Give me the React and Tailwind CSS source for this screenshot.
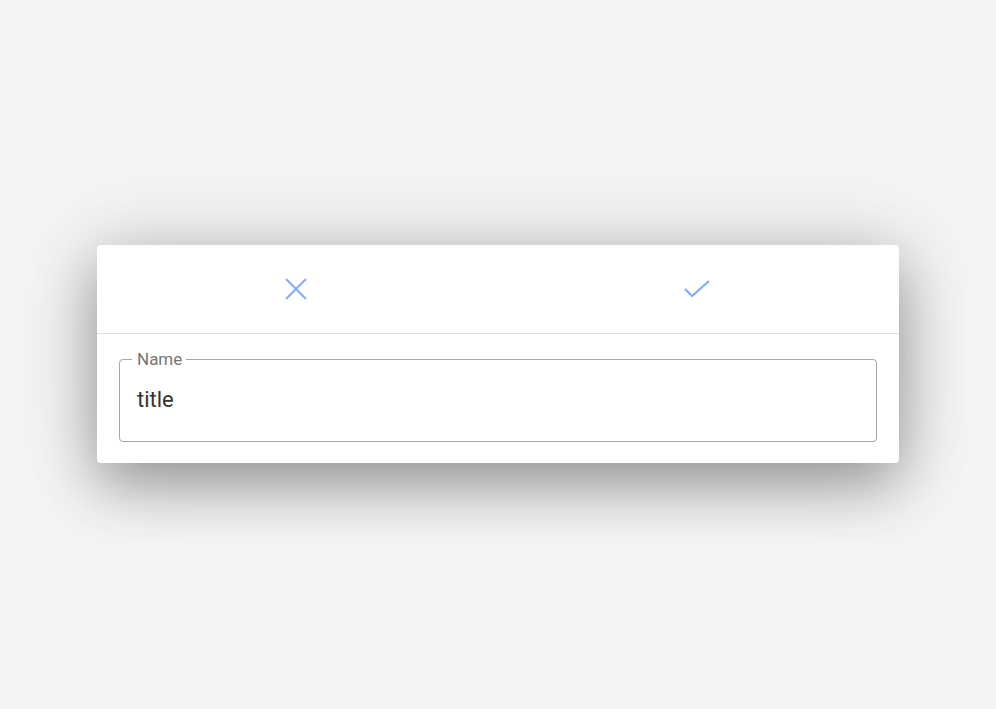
export default function App() {
  return (
    <div className="min-h-[709px] w-full bg-[#f4f4f4] flex items-start justify-center pt-[245px]" style={{ fontFamily: 'Roboto, "Noto Sans", sans-serif' }}>
      <div className="w-[802px] bg-white rounded-[4px] shadow-[0_22px_60px_rgba(0,0,0,0.35),0_0_90px_rgba(0,0,0,0.12)]">
        {/* Header */}
        <div className="h-[89px] flex border-b border-[#dedede]">
          <button className="flex-1 flex items-center justify-center text-[#82acfa] pr-[3px]">
            <svg width="24" height="24" viewBox="0 0 24 24" fill="none" stroke="currentColor" strokeWidth="2">
              <path d="M2 2 L22 22 M22 2 L2 22" />
            </svg>
          </button>
          <button className="flex-1 flex items-center justify-center text-[#82acfa] pr-[3px]">
            <svg width="28" height="22" viewBox="0 0 28 22" fill="none" stroke="currentColor" strokeWidth="2.2">
              <path d="M2 11 L9 18 L26 3" />
            </svg>
          </button>
        </div>

        {/* Input */}
        <div className="px-[22px] pt-[17px] pb-[21px]">
          <fieldset className="border border-[#a6a6a6] rounded-[4px] pl-[12px] pr-[12px] h-[91px]">
            <legend className="pl-[5px] pr-[4px] text-[17px] leading-[16px] text-[#757575]">Name</legend>
            <div className="text-[22px] text-[#333333] pt-[22px] pl-[5px] leading-none">title</div>
          </fieldset>
        </div>
      </div>
    </div>
  )
}
